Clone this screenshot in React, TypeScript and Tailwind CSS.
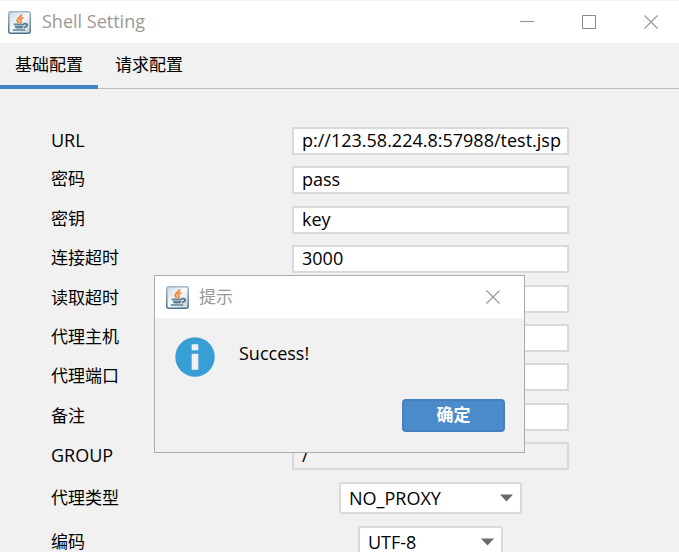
import React from 'react';
import clsx from 'clsx';

interface Field {
  id: string;
  label: string;
  value: string;
  disabled?: boolean;
}

const fields: Field[] = [
  { id: 'url', label: 'URL', value: 'p://123.58.224.8:57988/test.jsp' },
  { id: 'password', label: '密码', value: 'pass' },
  { id: 'secret', label: '密钥', value: 'key' },
  { id: 'connect-timeout', label: '连接超时', value: '3000' },
  { id: 'read-timeout', label: '读取超时', value: '' },
  { id: 'proxy-host', label: '代理主机', value: '' },
  { id: 'proxy-port', label: '代理端口', value: '' },
  { id: 'remark', label: '备注', value: '' },
  { id: 'group', label: 'GROUP', value: '/', disabled: true },
];

const JavaIcon: React.FC = () => (
  <svg width="23" height="23" viewBox="0 0 23 23" fill="none" className="shrink-0" aria-hidden="true">
    <defs>
      <linearGradient id="java-frame" x1="0" y1="0" x2="0" y2="1">
        <stop offset="0" stopColor="#a3b8c8" />
        <stop offset="1" stopColor="#4f7089" />
      </linearGradient>
      <linearGradient id="java-face" x1="0" y1="0" x2="1" y2="1">
        <stop offset="0" stopColor="#cbd8e2" />
        <stop offset="0.5" stopColor="#f8fafb" />
        <stop offset="1" stopColor="#c3d0da" />
      </linearGradient>
    </defs>
    <rect x="0.75" y="0.75" width="21.5" height="21.5" rx="2" fill="url(#java-face)" stroke="url(#java-frame)" strokeWidth="1.5" />
    <path d="M13.4 3.4c.4 2.7-5 3.8-4 6.6.3.9 1 1.3 1.6 2" stroke="#f08a3c" strokeWidth="2.2" />
    <path d="M15.4 6.6c-2.4 1-3.6 1.9-2.6 3.2.4.8.2 1.6-.6 2.2" stroke="#f08a3c" strokeWidth="2" />
    <path d="M5.4 12.6h10.8v2H6.2zM6.6 14.9h8.8l-1 2.7H7.8z" fill="#5f819b" />
    <path d="M15.6 12.8c4.6-1 4.8 2.6.2 3.9" stroke="#56788f" strokeWidth="1.9" />
    <path d="M4.8 19h12.4" stroke="#7592a8" strokeWidth="1.8" />
  </svg>
);

const CloseIcon: React.FC = () => (
  <svg width="14" height="14" viewBox="0 0 14 14" stroke="#999999" strokeWidth="1.2" aria-hidden="true">
    <path d="M0.5 0.5l13 13M13.5 0.5l-13 13" />
  </svg>
);

interface ComboProps {
  id: string;
  label: string;
  options: string[];
  className: string;
}

const Combo: React.FC<ComboProps> = ({ id, label, options, className }) => (
  <div className="flex items-center">
    <label htmlFor={id} className="w-[241px] shrink-0 text-[17px]">{label}</label>
    <div className="flex flex-1 justify-center">
      <div className={clsx('relative', className)}>
        <select
          id={id}
          className="h-8 w-full appearance-none rounded-[3px] border-2 border-[#d9d9d9] bg-white pl-2 text-lg leading-6 outline-none"
        >
          {options.map((option) => (
            <option key={option}>{option}</option>
          ))}
        </select>
        <svg width="13" height="8" viewBox="0 0 13 8" className="pointer-events-none absolute top-3 right-[9px]" aria-hidden="true">
          <path d="M0 0.5h13L6.5 7.5z" fill="#6a6a6a" />
        </svg>
      </div>
    </div>
  </div>
);

const MessageDialog: React.FC = () => (
  <div
    role="dialog"
    aria-labelledby="dialog-title"
    className="absolute inset-x-0 top-[275px] mx-auto w-[371px] border border-[#ababab] bg-[#f1f1f1]"
  >
    <header className="flex h-[42px] items-center bg-white pr-6 pl-[11px]">
      <JavaIcon />
      <h2 id="dialog-title" className="ml-[10px] flex-1 text-[17px] text-[#999999]">提示</h2>
      <button type="button" aria-label="关闭"><CloseIcon /></button>
    </header>
    <div className="flex items-start gap-6 px-5 pt-[19px]">
      <svg width="40" height="40" viewBox="0 0 40 40" className="shrink-0" aria-hidden="true">
        <circle cx="20" cy="20" r="19.7" fill="#389fd6" />
        <path d="M16.7 7.3h6.6v6h-6.6zM16.7 16.7h6.6v16h-6.6z" fill="#f1f1f1" />
      </svg>
      <p className="pt-1 text-lg leading-6">Success!</p>
    </div>
    <div className="flex justify-end pt-[22px] pr-[19px] pb-5">
      <button
        type="button"
        className="h-[33px] w-[103px] rounded-[4px] border-2 border-[#457fbe] bg-[#4c8bca] pb-0.5 text-[17px] leading-none font-bold text-white"
      >
        确定
      </button>
    </div>
  </div>
);

const App: React.FC = () => {
  return (
    <div className="relative flex h-screen flex-col overflow-hidden bg-[#f1f1f1] font-['Open_Sans','Noto_Sans_CJK_SC',sans-serif] text-black">
      <header className="flex h-[43px] shrink-0 items-center border-t border-[#f0f0f0] bg-white pr-[21px] pl-2">
        <JavaIcon />
        <h1 className="ml-[11px] flex-1 pb-0.5 text-lg leading-6 text-[#999999]">Shell Setting</h1>
        <div className="flex items-center gap-12">
          <button type="button" aria-label="最小化">
            <svg width="14" height="14" viewBox="0 0 14 14" stroke="#999999" strokeWidth="1.2"><path d="M0 6.5h14" /></svg>
          </button>
          <button type="button" aria-label="最大化">
            <svg width="14" height="14" viewBox="0 0 14 14" fill="none" stroke="#8a8a8a"><path d="M0.5 0.5h13v13h-13z" /></svg>
          </button>
          <button type="button" aria-label="关闭"><CloseIcon /></button>
        </div>
      </header>

      <nav role="tablist" className="flex h-[46px] shrink-0 border-b border-[#bfbfbf] text-[17px]">
        <button type="button" role="tab" aria-selected="true" className="-mb-px border-b-4 border-[#4083c9] px-[15px] pt-[2px]">
          基础配置
        </button>
        <button type="button" role="tab" aria-selected="false" className="-mb-px border-b-4 border-transparent px-[17px] pt-[2px]">
          请求配置
        </button>
      </nav>

      <form className="flex flex-col gap-3 pt-[38px] pr-[110px] pl-[51px]">
        <div className="flex min-h-[343px] flex-col justify-between">
          {fields.map((field) => (
            <div key={field.id} className="flex items-center">
              <label
                htmlFor={field.id}
                className={clsx('w-[241px] shrink-0 pb-0.5', /^[A-Z]+$/.test(field.label) ? 'text-lg/6' : 'text-[17px]/6')}
              >
                {field.label}
              </label>
              <input
                id={field.id}
                type="text"
                defaultValue={field.value}
                disabled={field.disabled}
                className="h-7 min-w-0 flex-1 border-2 border-[#d9d9d9] bg-white pb-0.5 pl-2 text-lg/6 outline-none disabled:bg-[#f1f1f1]"
              />
            </div>
          ))}
        </div>
        <Combo id="proxy-type" label="代理类型" options={['NO_PROXY', 'HTTP', 'SOCKS']} className="w-[183px]" />
        <Combo id="encoding" label="编码" options={['UTF-8', 'GBK']} className="w-[145px]" />
      </form>

      <MessageDialog />
    </div>
  );
};

export default App;
